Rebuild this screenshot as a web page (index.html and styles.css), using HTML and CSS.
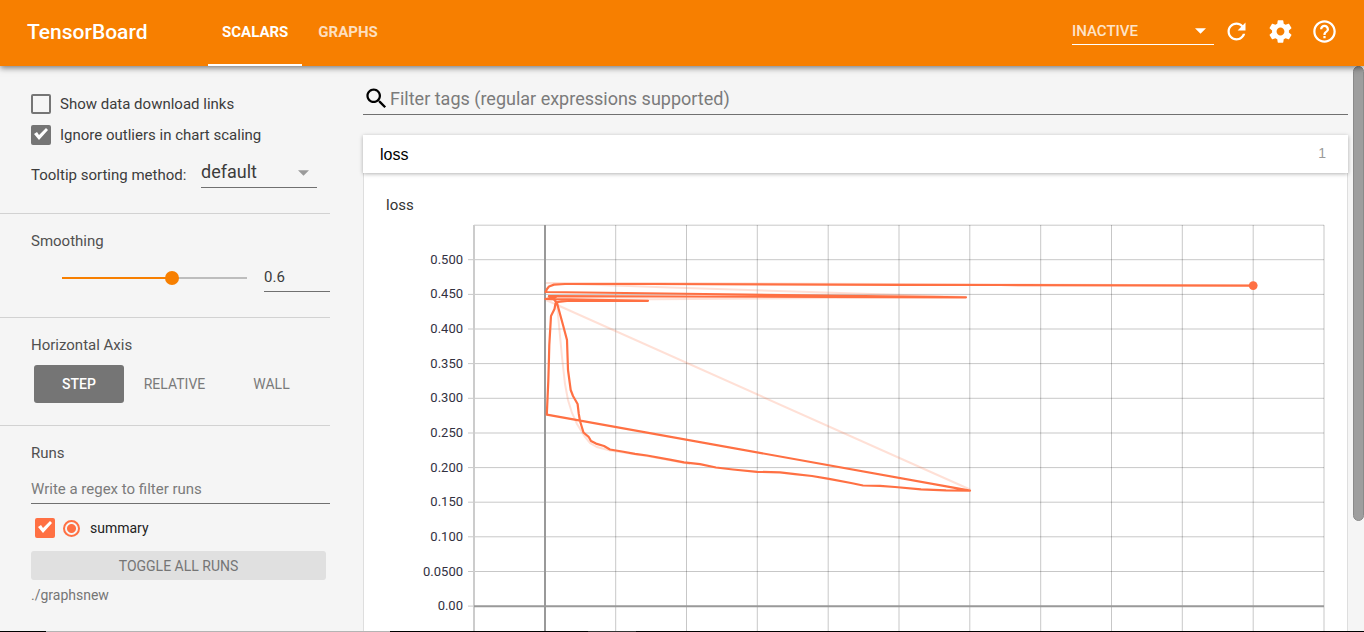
FILE: index.html
```html
<!DOCTYPE html>
<html lang="en">
<head>
<meta charset="utf-8">
<title>TensorBoard</title>
<link rel="stylesheet" href="styles.css">
</head>
<body>
<header class="toolbar">
  <h1 class="brand">TensorBoard</h1>
  <nav class="tabs">
    <a class="tab tab-active" href="#scalars">SCALARS</a>
    <a class="tab" href="#graphs">GRAPHS</a>
  </nav>
  <div class="select-wrap plugin-picker">
    <select class="select" aria-label="Inactive plugins"><option>INACTIVE</option></select>
    <svg class="caret" viewBox="0 0 10 5" aria-hidden="true"><path d="M0 0h10L5 5z"/></svg>
  </div>
  <button class="icon-button" aria-label="Reload"><svg class="icon" viewBox="0 0 24 24"><path d="M17.65 6.35C16.2 4.9 14.21 4 12 4c-4.42 0-7.99 3.58-7.99 8s3.57 8 7.99 8c3.73 0 6.84-2.55 7.73-6h-2.08c-.82 2.33-3.04 4-5.65 4-3.31 0-6-2.69-6-6s2.69-6 6-6c1.66 0 3.14.69 4.22 1.78L13 11h7V4l-2.35 2.35z"/></svg></button>
  <button class="icon-button" aria-label="Settings"><svg class="icon" viewBox="0 0 24 24"><path d="M19.43 12.98c.04-.32.07-.64.07-.98s-.03-.66-.07-.98l2.11-1.65c.19-.15.24-.42.12-.64l-2-3.46c-.12-.22-.39-.3-.61-.22l-2.49 1c-.52-.4-1.08-.73-1.69-.98l-.38-2.65C14.46 2.18 14.25 2 14 2h-4c-.25 0-.46.18-.49.42l-.38 2.65c-.61.25-1.17.59-1.69.98l-2.49-1c-.23-.09-.49 0-.61.22l-2 3.46c-.13.22-.07.49.12.64l2.11 1.65c-.04.32-.07.65-.07.98s.03.66.07.98l-2.11 1.65c-.19.15-.24.42-.12.64l2 3.46c.12.22.39.3.61.22l2.49-1c.52.4 1.08.73 1.69.98l.38 2.65c.03.24.24.42.49.42h4c.25 0 .46-.18.49-.42l.38-2.65c.61-.25 1.17-.59 1.69-.98l2.49 1c.23.09.49 0 .61-.22l2-3.46c.12-.22.07-.49-.12-.64l-2.11-1.65zM12 15.5c-1.93 0-3.5-1.57-3.5-3.5s1.57-3.5 3.5-3.5 3.5 1.57 3.5 3.5-1.57 3.5-3.5 3.5z"/></svg></button>
  <button class="icon-button" aria-label="Help"><svg class="icon" viewBox="0 0 24 24"><path d="M11 18h2v-2h-2v2zm1-16C6.48 2 2 6.48 2 12s4.48 10 10 10 10-4.48 10-10S17.52 2 12 2zm0 18c-4.41 0-8-3.59-8-8s3.59-8 8-8 8 3.59 8 8-3.59 8-8 8zm0-14c-2.21 0-4 1.79-4 4h2c0-1.1.9-2 2-2s2 .9 2 2c0 2-3 1.75-3 5h2c0-2.25 3-2.5 3-5 0-2.21-1.79-4-4-4z"/></svg></button>
</header>

<div class="workspace">
  <aside class="sidebar">
    <section class="panel panel-options">
      <label class="check-row"><input class="checkbox" type="checkbox">Show data download links</label>
      <label class="check-row"><input class="checkbox" type="checkbox" checked>Ignore outliers in chart scaling</label>
      <div class="tooltip-row">
        <label for="sorting">Tooltip sorting method:</label>
        <div class="select-wrap sort-picker">
          <select class="select" id="sorting"><option>default</option></select>
          <svg class="caret" viewBox="0 0 10 5" aria-hidden="true"><path d="M0 0h10L5 5z"/></svg>
        </div>
      </div>
    </section>
    <section class="panel">
      <h2 class="panel-title">Smoothing</h2>
      <div class="smoothing-row">
        <input class="slider" type="range" min="0" max="1" step="0.1" value="0.6" aria-label="Smoothing">
        <input class="number" type="text" value="0.6" aria-label="Smoothing value">
      </div>
    </section>
    <section class="panel panel-axis">
      <h2 class="panel-title">Horizontal Axis</h2>
      <div class="axis-row">
        <button class="axis-button axis-selected">STEP</button>
        <button class="axis-button">RELATIVE</button>
        <button class="axis-button">WALL</button>
      </div>
    </section>
    <section class="panel panel-runs">
      <h2 class="panel-title">Runs</h2>
      <input class="runs-filter" type="text" placeholder="Write a regex to filter runs" aria-label="Filter runs">
      <div class="run-row">
        <input class="checkbox checkbox-run" id="run" type="checkbox" checked>
        <input class="radio" type="radio" checked aria-label="Only show summary">
        <label class="run-name" for="run">summary</label>
      </div>
      <button class="toggle-all">TOGGLE ALL RUNS</button>
      <p class="logdir">./graphsnew</p>
    </section>
  </aside>

  <main class="content">
    <div class="tag-filter">
      <svg class="search-icon" viewBox="0 0 24 24" aria-hidden="true"><path d="M15.5 14h-.79l-.28-.27C15.41 12.59 16 11.11 16 9.5 16 5.91 13.09 3 9.5 3S3 5.91 3 9.5 5.91 16 9.5 16c1.61 0 3.09-.59 4.23-1.57l.27.28v.79l5 4.99L20.49 19l-4.99-5zm-6 0C7.01 14 5 11.99 5 9.5S7.01 5 9.5 5 14 7.01 14 9.5 11.99 14 9.5 14z"/></svg>
      <input class="tag-input" type="text" placeholder="Filter tags (regular expressions supported)" aria-label="Filter tags">
    </div>
    <button class="card-header"><span>loss</span><span class="count">1</span></button>
    <div class="card-body">
      <h3 class="chart-title">loss</h3>
      <svg class="chart" viewBox="386 224 939 407" role="img" aria-label="loss by step">
        <path class="grid" d="M474 225.2H1324M468 259.7H1324M468 294.4H1324M468 329H1324M468 363.6H1324M468 398.3H1324M468 433H1324M468 467.6H1324M468 502.2H1324M468 536.8H1324M468 571.5H1324M468 606.1H474"/>
        <path class="grid" d="M615.7 225V640M686.5 225V640M757.3 225V640M828.2 225V640M899 225V640M969.8 225V640M1040.7 225V640M1111.5 225V640M1182.3 225V640M1253.2 225V640M1324 225V640"/>
        <path class="frame" d="M474 225V640"/>
        <path class="zero" d="M545 225V640M474 606.2H1324"/>
        <g class="ticks">
          <text x="463" y="264">0.500</text><text x="463" y="298">0.450</text>
          <text x="463" y="333">0.400</text><text x="463" y="368">0.350</text>
          <text x="463" y="402">0.300</text><text x="463" y="437">0.250</text>
          <text x="463" y="472">0.200</text><text x="463" y="506">0.150</text>
          <text x="463" y="541">0.100</text><text x="463" y="576">0.0500</text>
          <text x="463" y="610">0.00</text>
        </g>
        <path class="raw" d="M1253 285.5L654 283H546L670 287.5L966 297L546 300L970 489.5"/>
        <path class="raw" d="M557 304L562 357L565 384L568 400L572 413L577 424L585 437L590 443L597 447L610 450.5L647 456L690 464"/>
        <path class="series" d="M1253 285.7L1000 285L900 284.9L650 284H565L554 284.6L549 286.5L547 289L545.6 292L966 297.3L549 296.2L556 297L545.5 299L570 299.4L648 300.8L567 300.8L558 302L555.5 303.5L554.5 309L551 316L549.3 345L549 357L548.3 381L546.8 414.6L970 490.6L946 490.3L921 489.3L895 487L880 485.8L863 485.5L851 483L829 478.8L812 476L795 474.2L780 472.4L757 471.8L733 469.5L716 467.5L700 464.2L684 462.3L671 459.8L647 455.5L635 453.8L622 451.5L610 449.5L604 446L596 443.6L591 441L588.6 436.8L583.5 432.5L580 421L578.8 414L577.6 404L573 396L570.7 390L568 370L567.6 358L567 340L563 325L560 314L557 303L552 297.2L548 296"/>
        <circle class="end-point" cx="1253.2" cy="285.6" r="4.4"/>
      </svg>
    </div>
  </main>
  <div class="scroll-thumb"></div>
</div>
<div class="status-strip"></div>
</body>
</html>
```

FILE: styles.css
```css
* { box-sizing: border-box; }

body {
  margin: 0;
  height: 100vh;
  display: flex;
  flex-direction: column;
  overflow: hidden;
  background: #f5f5f5;
  color: #3c3c3c;
  font: 15px/20px Roboto, sans-serif;
}

h1, h2, h3, p { margin: 0; font-weight: 400; }
button, input, select { font: inherit; color: inherit; margin: 0; padding: 0; border: 0; border-radius: 0; background: none; outline: 0; }
button { cursor: pointer; }
svg { display: block; }

.toolbar {
  position: relative;
  z-index: 2;
  flex: none;
  display: flex;
  align-items: center;
  height: 66px;
  padding: 0 18px 4px 27px;
  background: #f77f00;
  color: #fff;
  box-shadow: 0 2px 6px rgba(0, 0, 0, .5);
}
.brand { width: 181px; padding-top: 2px; font-size: 21px; line-height: 28px; font-weight: 500; }
.tabs { display: flex; align-self: stretch; gap: 2px; margin-bottom: -4px; }
.tab {
  display: flex;
  align-items: center;
  padding: 0 14px;
  border-bottom: 2px solid transparent;
  color: rgba(255, 255, 255, .75);
  font-weight: 700;
  text-decoration: none;
}
.tab-active { border-color: #fff; color: #fff; }

.select-wrap { position: relative; }
.select { appearance: none; width: 100%; height: 100%; cursor: pointer; }
.caret { position: absolute; right: 8px; top: 50%; width: 11px; height: 6px; fill: currentColor; pointer-events: none; }
.plugin-picker { width: 142px; height: 28px; margin-left: auto; border-bottom: 1px solid #fff; }
.plugin-picker .select { color: rgba(255, 255, 255, .8); font-weight: 500; }
.plugin-picker .caret { top: 11px; }

.icon-button { display: grid; place-items: center; width: 44px; height: 44px; }
.icon { width: 27px; height: 27px; fill: currentColor; }

.workspace { position: relative; flex: 1; min-height: 0; display: flex; overflow: hidden; }
.sidebar { flex: 0 0 330px; }
.panel { padding: 17px 0 25px 31px; border-bottom: 1px solid #d2d2d2; }
.panel-options { padding-top: 28px; }
.panel-axis { padding-bottom: 22px; }
.panel-runs { border: 0; padding-bottom: 0; }
.panel-title { font-size: 15px; line-height: 20px; color: #505050; }

.check-row { display: flex; align-items: center; gap: 9px; margin-bottom: 11px; }
.checkbox {
  appearance: none;
  display: grid;
  place-items: center;
  flex: none;
  width: 20px;
  height: 20px;
  border: 2px solid #757575;
  border-radius: 2px;
}
.checkbox:checked { background: #757575; }
.checkbox:checked::after {
  content: "";
  width: 16px;
  height: 14px;
  background: #fff;
  clip-path: polygon(1px 6px, 4px 4px, 6px 7px, 13px 0, 15px 2px, 6px 12px);
}
.checkbox-run { border-color: #ff7043; }
.checkbox-run:checked { background: #ff7043; }

.tooltip-row { display: flex; align-items: flex-end; justify-content: space-between; margin: 14px 13px 0 0; }
.tooltip-row label { padding-bottom: 3px; }
.sort-picker { width: 116px; height: 29px; border-bottom: 1px solid #707070; font-size: 18px; line-height: 24px; }
.sort-picker .select { padding-bottom: 2px; }
.sort-picker .caret { top: 11px; color: #9a9a9a; }

.smoothing-row { display: flex; align-items: stretch; height: 30px; margin: 11px 0 0 31px; }
.slider {
  appearance: none;
  flex: 1;
  min-width: 0;
  height: 32px;
  margin-right: 17px;
  background: linear-gradient(to right, #f77f00 60%, #bdbdbd 60%) center / 100% 2px no-repeat;
}
.slider::-webkit-slider-thumb { appearance: none; width: 14px; height: 14px; border-radius: 50%; background: #f77f00; }
.number { width: 66px; border-bottom: 1px solid #707070; }

.axis-row { display: flex; gap: 4px; margin: 10px 0 0 3px; font-size: 14px; color: #7a7a7a; }
.axis-button { min-width: 90px; height: 38px; padding: 0 14px; border-radius: 3px; }
.axis-button + .axis-button { min-width: 93px; }
.axis-selected { background: #757575; color: #fff; font-weight: 500; }

.runs-filter { display: block; width: 100%; height: 29px; margin-top: 12px; border-bottom: 1px solid #707070; }
.runs-filter::placeholder, .tag-input::placeholder { color: #7b7b7b; opacity: 1; }
.run-row { display: flex; align-items: center; margin: 14px 4px 13px; }
.radio {
  appearance: none;
  width: 17px;
  height: 17px;
  margin: 0 10px 0 8px;
  border: 2px solid #ff7043;
  border-radius: 50%;
  background: radial-gradient(circle, #ff7043 4px, transparent 5px);
}
.run-name { font-size: 14px; color: #222; }
.toggle-all { display: block; width: 295px; height: 29px; border-radius: 3px; background: #e0e0e0; color: #757575; font-size: 14px; }
.logdir { margin-top: 5px; font-size: 14px; color: #757575; }

.content { flex: 1; min-width: 0; padding: 17px 16px 0 33px; }
.tag-filter { display: flex; align-items: center; height: 32px; border-bottom: 1px solid #707070; }
.search-icon { flex: none; width: 27px; height: 27px; }
.tag-input { flex: 1; min-width: 0; height: 31px; font-size: 18px; }
.card-header {
  position: relative;
  display: flex;
  align-items: center;
  justify-content: space-between;
  width: 100%;
  height: 38px;
  margin-top: 20px;
  padding: 2px 22px 0 17px;
  background: #fff;
  color: #000;
  font-family: "Liberation Sans", sans-serif;
  font-size: 16px;
  box-shadow: 0 1px 4px rgba(0, 0, 0, .3);
}
.count { padding-bottom: 5px; color: #9a9a9a; font-size: 14px; }
.card-body { padding: 22px 22px 0 22px; border: 1px solid #dedede; border-width: 0 1px; background: #fff; }
.chart-title { font-size: 15px; line-height: 20px; margin-bottom: 9px; color: #333; }
.chart { width: 100%; height: auto; overflow: hidden; }
.grid, .frame, .zero, .raw, .series { fill: none; }
.grid { stroke: #000; stroke-opacity: .22; }
.frame { stroke: #ccc; stroke-width: 2; }
.zero { stroke: #999; stroke-width: 2; }
.ticks { fill: #32313f; font-size: 13px; text-anchor: end; }
.raw { stroke: #ff7043; stroke-opacity: .22; stroke-width: 2; }
.series { stroke: #ff7043; stroke-width: 2.2; stroke-linejoin: round; }
.end-point { fill: #ff7043; }

.scroll-thumb {
  position: absolute;
  top: 0;
  right: 0;
  width: 11px;
  height: 80.5%;
  border: 1px solid #8a8a8a;
  border-radius: 6px;
  background: #9e9e9e;
}
.status-strip {
  flex: none;
  height: 1px;
  background: linear-gradient(to right, #000 46px, #b4b4b4 46px, #b4b4b4 390px, #000 390px, #000 588px, #333 588px, #333 636px, #000 636px);
}
```
